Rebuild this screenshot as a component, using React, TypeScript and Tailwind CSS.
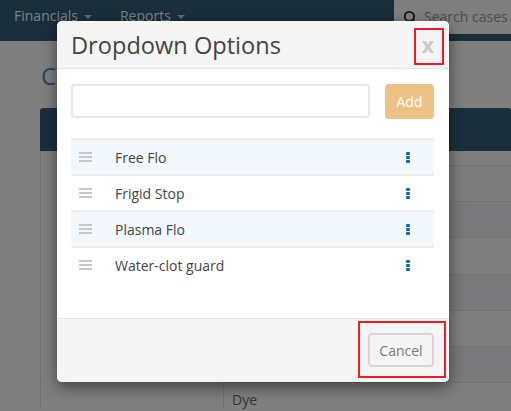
import { Search } from "lucide-react";

const options = ["Free Flo", "Frigid Stop", "Plasma Flo", "Water-clot guard"];

const Caret = () => (
  <span className="ml-[6px] inline-block align-middle border-x-[4px] border-t-[4px] border-x-transparent border-t-[#5f6b72]" />
);

const DragHandle = () => (
  <div className="flex flex-col gap-[2px] w-[13px]">
    <div className="h-[2px] bg-[#c8c8c8]" />
    <div className="h-[2px] bg-[#c8c8c8]" />
    <div className="h-[2px] bg-[#c8c8c8]" />
  </div>
);

const Kebab = () => (
  <div className="flex flex-col gap-[1px] w-[4px]">
    <div className="h-[3px] bg-[#0f6aa8] rounded-[1px]" />
    <div className="h-[3px] bg-[#0f6aa8] rounded-[1px]" />
    <div className="h-[3px] bg-[#0f6aa8] rounded-[1px]" />
  </div>
);

const Background = () => (
  <div className="w-[511px] h-[411px] overflow-hidden bg-[#7f7f7f] font-['Open_Sans',sans-serif]">
    <nav className="h-[41px] flex bg-[#1a2f3b]">
      <div className="flex-1 flex items-start pl-[14px] pt-[5px] text-[14px] leading-[21px] text-[#7b868c]">
        <span>
          Financials
          <Caret />
        </span>
        <span className="ml-[28px]">
          Reports
          <Caret />
        </span>
      </div>
      <div className="w-[117px] h-[34px] bg-[#7f7f7f] flex items-center pl-[9px] gap-[7px] text-[14px] text-[#4c4c4c]">
        <Search size={14} strokeWidth={3} className="text-[#111]" />
        <span className="whitespace-nowrap -mt-[2px]">Search cases</span>
      </div>
    </nav>
    <div className="pl-[41px] pt-[20px] h-[67px] text-[24px] leading-[30px] text-[#1c4a66]">Ca</div>
    <div className="ml-[40px]">
      <div className="h-[43px] bg-[#1a2f3b] rounded-t-[3px]" />
      <div className="grid grid-cols-[182px_1fr] border-l border-[#737373]">
        <div />
        <div className="border-l border-[#737373] text-[14px] text-[#333]">
          <div className="h-[15px] border-b border-[#737373]" />
          <div className="h-[36px] border-b border-[#737373] bg-[#7d7d7d]" />
          <div className="h-[36px] border-b border-[#737373] bg-[#7a7a7c]" />
          <div className="h-[37px] border-b border-[#737373] bg-[#7f7f7f]" />
          <div className="h-[36px] border-b border-[#737373] bg-[#7a7a7c]" />
          <div className="h-[36px] border-b border-[#737373] bg-[#7f7f7f]" />
          <div className="h-[36px] border-b border-[#737373] bg-[#7a7a7c]" />
          <div className="pl-[8px] pt-[7px] leading-[20px]">Dye</div>
        </div>
      </div>
    </div>
  </div>
);

export default function App() {
  return (
    <div className="relative w-[511px] h-[411px] overflow-hidden">
      <Background />
      <div className="absolute left-[57px] top-[21px] w-[392px] h-[361px] flex flex-col rounded-[5px] bg-white overflow-hidden shadow-[0_5px_15px_rgba(0,0,0,0.5)] font-['Open_Sans',sans-serif] text-[#444]">
        <div className="h-[48px] shrink-0 flex items-center justify-between pl-[14px] pr-[15px] bg-[#f5f5f5] border-b border-[#e5e5e5]">
          <h4 className="text-[23.6px] leading-[34px] text-[#444]">Dropdown Options</h4>
          <span className="text-[21px] font-bold text-[#cacaca] leading-none mt-[2px]">x</span>
        </div>
        <div className="flex-1 pl-[14px] pr-[15px] pt-[15px]">
          <div className="flex justify-between">
            <div className="w-[299px] h-[34px] bg-white border-2 border-[#e7e7e7] rounded-[4px]" />
            <button className="w-[49px] h-[35px] bg-[#ecc285] rounded-[4px] text-white text-[14px]">Add</button>
          </div>
          <ul className="mt-[19px] border-t-2 border-[#ececec]">
            {options.map((o, i) => (
              <li
                key={o}
                className={`h-[36px] flex items-center pl-[8px] pr-[24px] text-[14px] border-b-2 ${
                  i % 2 === 0 ? "bg-[#f3f8fc]" : "bg-white"
                } ${i < 3 ? "border-[#ececec]" : "border-transparent"}`}
              >
                <DragHandle />
                <span className="ml-[23px] flex-1">{o}</span>
                <Kebab />
              </li>
            ))}
          </ul>
        </div>
        <div className="h-[64px] shrink-0 flex items-start justify-end pt-[14px] pr-[15px] bg-[#f5f5f5] border-t border-[#e7e7e7]">
          <button className="w-[66px] h-[34px] border-2 border-[#d6d6d6] rounded-[4px] text-[14px] text-[#7a7a7a]">Cancel</button>
        </div>
      </div>
      {/* red annotation boxes */}
      <div className="absolute left-[414px] top-[28px] w-[30px] h-[37px] border-2 border-[#ee1c25]" />
      <div className="absolute left-[358px] top-[321px] w-[88px] h-[57px] border-2 border-[#ee1c25]" />
    </div>
  );
}
